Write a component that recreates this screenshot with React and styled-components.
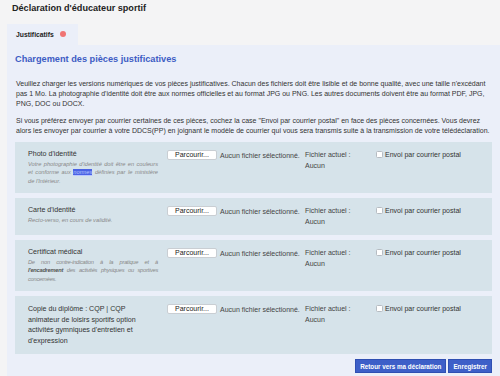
import React from "react";
import styled, { createGlobalStyle } from "styled-components";

const GlobalStyle = createGlobalStyle`
  html, body {
    margin: 0;
    padding: 0;
    background: #f4f4f5;
    font-family: "Liberation Sans", Arial, sans-serif;
    color: #333;
  }
`;

const Page = styled.div`
  padding-left: 7px;
  height: 376px;
  overflow: hidden;
`;

const Title = styled.h1`
  margin: 0;
  padding: 3px 5px 0;
  height: 21px;
  font-size: 9.1px;
  line-height: 11px;
  font-weight: bold;
  color: #222;
`;

const Tabs = styled.div`
  display: flex;
`;

const Tab = styled.div`
  display: flex;
  align-items: center;
  gap: 6px;
  height: 21px;
  padding: 0 12px 0 9px;
  background: #ebeff9;
  font-size: 6.8px;
  font-weight: bold;
  color: #222;
`;

const Dot = styled.span`
  width: 6px;
  height: 6px;
  border-radius: 50%;
  background: #f07474;
  margin-top: -2px;
`;

const Panel = styled.div`
  background: #ebeff9;
  padding: 7px 8px 8px;
`;

const Heading = styled.h2`
  margin: 0;
  font-size: 9.2px;
  line-height: 14px;
  font-weight: bold;
  color: #3d5cc4;
`;

const Intro = styled.p`
  margin: ${(p) => (p.$first ? "13px" : "7px")} 1px 0;
  font-size: 7px;
  line-height: 10px;
  color: #333;
`;

const Rows = styled.div`
  display: flex;
  flex-direction: column;
  gap: 5px;
  margin-top: 6px;
`;

const Row = styled.div`
  display: grid;
  grid-template-columns: 130px 147px 71px 1fr;
  align-items: start;
  padding: 8px 13px;
  background: #d6e3ea;
  min-height: ${(p) => p.$min || 0}px;
  box-sizing: border-box;
`;

const LabelCol = styled.div``;

const Label = styled.div`
  font-size: 7.1px;
  line-height: ${(p) => (p.$tall ? "10.5px" : "9px")};
  color: #333;
`;

const Hint = styled.div`
  margin-top: 0.5px;
  font-size: 5.7px;
  line-height: 8.5px;
  font-style: italic;
  color: #888;
  text-align: justify;
  letter-spacing: ${(p) => (p.$tight ? "-0.25px" : "0")};

  b {
    color: #555;
  }
`;

const Normes = styled.span`
  background: #4a62e4;
  color: #b9c6ff;
  text-decoration: underline;
`;

const FileCol = styled.div`
  display: flex;
  align-items: center;
  gap: 3px;
  margin-left: 9px;
  white-space: nowrap;
`;

const Browse = styled.button`
  width: 50px;
  height: 10px;
  padding: 0;
  border: 1px solid #c9ced3;
  border-radius: 2px;
  background: #fff;
  font-family: inherit;
  font-size: 7px;
  line-height: 8px;
  color: #222;
`;

const Muted = styled.span`
  font-size: 7px;
  color: #444;
`;

const Current = styled.div`
  font-size: 7px;
  line-height: 11px;
  color: #444;
  margin-top: -1px;
`;

const Postal = styled.label`
  display: flex;
  align-items: center;
  gap: 2px;
  font-size: 7px;
  line-height: 9px;
  color: #333;
  white-space: nowrap;
`;

const Box = styled.span`
  width: 5px;
  height: 5px;
  border: 1px solid #b6bcc2;
  border-radius: 1.5px;
  background: #fff;
`;

const Footer = styled.div`
  display: flex;
  justify-content: flex-end;
  gap: 2px;
  margin-top: 5px;
`;

const Action = styled.button`
  height: 14px;
  padding: 0 4px;
  border: 1px solid #2f4fb2;
  background: #3d5fc8;
  color: #fff;
  font-family: inherit;
  font-size: 6.3px;
  font-weight: bold;
`;

const pieces = [
  {
    label: "Photo d'identité",
    hint: (
      <>
        Votre photographie d'identité doit être en couleurs et conforme aux{" "}
        <Normes>normes</Normes> définies par le ministère de l'Intérieur.
      </>
    ),
    min: 51,
  },
  {
    label: "Carte d'identité",
    hint: "Recto-verso, en cours de validité.",
    min: 36,
  },
  {
    label: "Certificat médical",
    hint: (
      <>
        De non contre-indication à la pratique et à <b>l'encadrement</b> des
        activités physiques ou sportives concernées.
      </>
    ),
    tight: true,
    min: 50,
  },
  {
    label:
      "Copie du diplôme : CQP | CQP animateur de loisirs sportifs option activités gymniques d'entretien et d'expression",
    tall: true,
    min: 57,
  },
];

export default function App() {
  return (
    <Page>
      <GlobalStyle />
      <Title>Déclaration d'éducateur sportif</Title>
      <Tabs>
        <Tab>
          Justificatifs
          <Dot />
        </Tab>
      </Tabs>
      <Panel>
        <Heading>Chargement des pièces justificatives</Heading>
        <Intro $first>
          Veuillez charger les versions numériques de vos pièces justificatives.
          Chacun des fichiers doit être lisible et de bonne qualité, avec une
          taille n'excédant pas 1 Mo. La photographie d'identité doit être aux
          normes officielles et au format JPG ou PNG. Les autres documents
          doivent être au format PDF, JPG, PNG, DOC ou DOCX.
        </Intro>
        <Intro>
          Si vous préférez envoyer par courrier certaines de ces pièces, cochez
          la case "Envoi par courrier postal" en face des pièces concernées.
          Vous devrez alors les envoyer par courrier à votre DDCS(PP) en
          joignant le modèle de courrier qui vous sera transmis suite à la
          transmission de votre télédéclaration.
        </Intro>
        <Rows>
          {pieces.map((p) => (
            <Row key={p.label} $min={p.min}>
              <LabelCol>
                <Label $tall={p.tall}>{p.label}</Label>
                {p.hint && <Hint $tight={p.tight}>{p.hint}</Hint>}
              </LabelCol>
              <FileCol>
                <Browse type="button">Parcourir...</Browse>
                <Muted>Aucun fichier sélectionné.</Muted>
              </FileCol>
              <Current>
                Fichier actuel :<br />
                Aucun
              </Current>
              <Postal>
                <Box />
                Envoi par courrier postal
              </Postal>
            </Row>
          ))}
        </Rows>
        <Footer>
          <Action type="button">Retour vers ma déclaration</Action>
          <Action type="button">Enregistrer</Action>
        </Footer>
      </Panel>
    </Page>
  );
}
